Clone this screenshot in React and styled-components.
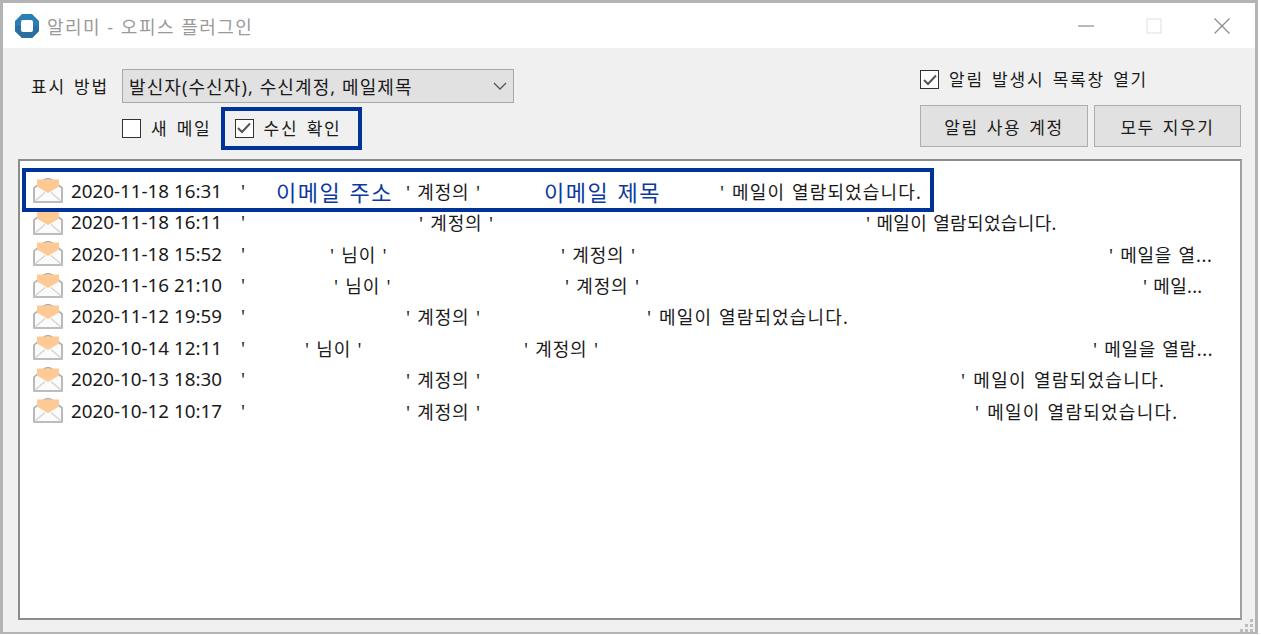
import styled, { createGlobalStyle } from "styled-components";

const Global = createGlobalStyle`
  html, body { margin: 0; padding: 0; background: #fff; }
  body { font-family: "Noto Sans", "Noto Sans CJK KR", sans-serif; color: #1a1a1a; }
`;

const Frame = styled.div`
  position: relative;
  box-sizing: border-box;
  width: 1258px;
  height: 634px;
  border: 3px solid #b4b4b4;
  border-bottom-width: 2px;
  display: flex;
  flex-direction: column;
  background: #f0f0f0;
  overflow: hidden;
`;

const TitleBar = styled.div`
  height: 45px;
  flex: none;
  background: #fff;
  display: flex;
  align-items: center;
  padding-left: 12px;
`;

const AppTitle = styled.span`
  margin-left: 8px;
  font-size: 18px;
  letter-spacing: 1.5px;
  color: #9a9a9a;
`;

const WinButtons = styled.div`
  margin-left: auto;
  display: flex;
  align-items: center;
  gap: 52px;
  padding-right: 25px;
`;

const Toolbar = styled.div`
  display: flex;
  justify-content: space-between;
  height: 111px;
  flex: none;
  box-sizing: border-box;
  padding: 21px 14px 0 28px;
`;

const LeftTools = styled.div`
  display: flex;
  flex-direction: column;
`;

const PickRow = styled.div`
  display: flex;
  align-items: center;
  gap: 13px;
`;

const Label = styled.span`
  font-size: 17px;
  line-height: 21px;
  letter-spacing: 1.8px;
  word-spacing: 2px;
  white-space: nowrap;
`;

const Select = styled.div`
  box-sizing: border-box;
  width: 392px;
  height: 34px;
  background: #e1e1e1;
  border: 1px solid #a9a9a9;
  display: flex;
  align-items: center;
  justify-content: space-between;
  padding: 0 6px;
  font-size: 18px;
  letter-spacing: 1.1px;
`;

const CheckRow = styled.div`
  display: flex;
  align-items: center;
  margin: 8px 0 0 91px;
  height: 34px;
`;

const Check = styled.label`
  display: flex;
  align-items: center;
  gap: 10px;
  margin-left: ${(p) => p.$left || 0}px;
`;

const Box = styled.span`
  box-sizing: border-box;
  width: 19px;
  height: 19px;
  flex: none;
  border: 1.5px solid #333;
  background: #fff;
  display: flex;
  align-items: center;
  justify-content: center;
`;

const RightTools = styled.div`
  width: 321px;
  display: flex;
  flex-direction: column;
`;

const Buttons = styled.div`
  display: flex;
  gap: 6px;
  margin-top: 15px;
`;

const Button = styled.div`
  box-sizing: border-box;
  height: 42px;
  width: ${(p) => p.$w}px;
  background: #e1e1e1;
  border: 1.5px solid #adadad;
  display: flex;
  align-items: center;
  justify-content: center;
  font-size: 17px;
  letter-spacing: 1.6px;
  word-spacing: 2px;
`;

const List = styled.div`
  box-sizing: border-box;
  margin: 0 13px 0 15px;
  height: 461px;
  background: #fff;
  border: 2px solid #8c8c8c;
  border-right-color: #a0a0a0;
  padding-top: 14px;
`;

const Row = styled.div`
  height: 31.45px;
  display: flex;
  align-items: center;
  padding-left: 13px;
  white-space: nowrap;
`;

const Stamp = styled.span`
  width: 170px;
  margin-left: 8px;
  flex: none;
  font-size: 18.8px;
`;

const Cell = styled.span`
  flex: none;
  width: ${(p) => p.$w}px;
  font-size: 18px;
  color: #1a1a1a;
  letter-spacing: ${(p) => p.$ls}px;
  word-spacing: 1px;
`;

const Note = styled(Cell)`
  font-size: 22px;
  color: #0b3a9e;
  letter-spacing: 1.5px;
`;

const Highlight = styled.div`
  position: absolute;
  box-sizing: border-box;
  border: 4px solid #003399;
  left: ${(p) => p.$x}px;
  top: ${(p) => p.$y}px;
  width: ${(p) => p.$w}px;
  height: ${(p) => p.$h}px;
  pointer-events: none;
`;

const Grip = styled.svg`
  position: absolute;
  right: 1px;
  bottom: 0;
`;

const Logo = () => (
  <svg width="24" height="24" viewBox="0 0 24 24">
    <path d="M7 0H17L24 7V17L17 24H7L0 17V7Z" fill="#2b7db5" />
    <path d="M0 12V17L7 24H17L24 17V12Z" fill="#2a6f9f" />
    <rect x="6" y="6" width="12" height="12" rx="2" fill="#fff" />
  </svg>
);

const Minimize = () => (
  <svg width="16" height="16" viewBox="0 0 16 16">
    <path d="M0 8H16" stroke="#8a8a8a" strokeWidth="1.2" />
  </svg>
);

const Maximize = () => (
  <svg width="16" height="16" viewBox="0 0 16 16">
    <rect x="1" y="1" width="14" height="14" fill="none" stroke="#e4e4e4" strokeWidth="1.2" />
  </svg>
);

const Close = () => (
  <svg width="16" height="16" viewBox="0 0 16 16">
    <path d="M0.5 0.5L15.5 15.5M15.5 0.5L0.5 15.5" stroke="#8a8a8a" strokeWidth="1.2" />
  </svg>
);

const Chevron = () => (
  <svg width="14" height="8" viewBox="0 0 14 8">
    <path d="M1 1L7 7L13 1" fill="none" stroke="#555" strokeWidth="1.3" />
  </svg>
);

const Tick = () => (
  <svg width="14" height="12" viewBox="0 0 14 12">
    <path d="M1 6L5 10L13 1.5" fill="none" stroke="#555" strokeWidth="2" />
  </svg>
);

const Envelope = () => (
  <svg width="30" height="25" viewBox="0 0 30 25" style={{ flex: "none" }}>
    <path d="M1 10L11 2Q15 -0.5 19 2L29 10V24H1Z" fill="#fbfbfb" stroke="#a8a8a8" strokeWidth="1.6" />
    <path d="M1.5 23.5L12 14.5M28.5 23.5L18 14.5" stroke="#d2d2d2" strokeWidth="1.2" fill="none" />
    <path d="M4 1.5H26V8.5L15 15L4 8.5Z" fill="#fdc994" />
  </svg>
);

const Checkbox = ({ checked, left, children }) => (
  <Check $left={left}>
    <Box>{checked && <Tick />}</Box>
    <Label>{children}</Label>
  </Check>
);

// [cell width, text, letter spacing]; a Note is the blue annotation over a blanked-out value
const rows = [
  { date: "2020-11-18 16:31", cells: [[35, "'"], [130, "이메일 주소", 0, true], [138, "' 계정의 '"], [176, "이메일 제목", 0, true], [400, "' 메일이 열람되었습니다.", 1.15]] },
  { date: "2020-11-18 16:11", cells: [[178, "'"], [447, "' 계정의 '"], [300, "' 메일이 열람되었습니다.", 0.35]] },
  { date: "2020-11-18 15:52", cells: [[89, "'"], [231, "' 님이 '"], [548, "' 계정의 '"], [120, "' 메일을 열...", 0.75]] },
  { date: "2020-11-16 21:10", cells: [[93, "'"], [231, "' 님이 '"], [578, "' 계정의 '"], [80, "' 메일...", 0.3]] },
  { date: "2020-11-12 19:59", cells: [[165, "'"], [241, "' 계정의 '"], [300, "' 메일이 열람되었습니다.", 1.15]] },
  { date: "2020-10-14 12:11", cells: [[64, "'"], [219, "' 님이 '"], [569, "' 계정의 '"], [130, "' 메일을 열람...", 0.7]] },
  { date: "2020-10-13 18:30", cells: [[165, "'"], [555, "' 계정의 '"], [300, "' 메일이 열람되었습니다.", 1.3]] },
  { date: "2020-10-12 10:17", cells: [[165, "'"], [569, "' 계정의 '"], [300, "' 메일이 열람되었습니다.", 1.25]] },
];

export default function App() {
  return (
    <Frame>
      <Global />
      <TitleBar>
        <Logo />
        <AppTitle>알리미 - 오피스 플러그인</AppTitle>
        <WinButtons>
          <Minimize />
          <Maximize />
          <Close />
        </WinButtons>
      </TitleBar>
      <Toolbar>
        <LeftTools>
          <PickRow>
            <Label>표시 방법</Label>
            <Select>
              <span>발신자(수신자), 수신계정, 메일제목</span>
              <Chevron />
            </Select>
          </PickRow>
          <CheckRow>
            <Checkbox>새 메일</Checkbox>
            <Checkbox checked left={23}>수신 확인</Checkbox>
          </CheckRow>
        </LeftTools>
        <RightTools>
          <Check>
            <Box><Tick /></Box>
            <Label>알림 발생시 목록창 열기</Label>
          </Check>
          <Buttons>
            <Button $w={168}>알림 사용 계정</Button>
            <Button $w={147}>모두 지우기</Button>
          </Buttons>
        </RightTools>
      </Toolbar>
      <List>
        {rows.map((row) => (
          <Row key={row.date}>
            <Envelope />
            <Stamp>{row.date}</Stamp>
            {row.cells.map(([w, text, ls = 0.8, note], i) =>
              note ? (
                <Note key={i} $w={w}>{text}</Note>
              ) : (
                <Cell key={i} $w={w} $ls={ls}>{text}</Cell>
              )
            )}
          </Row>
        ))}
      </List>
      <Highlight $x={218} $y={104} $w={141} $h={43} />
      <Highlight $x={19} $y={165} $w={912} $h={44} />
      <Grip width="14" height="14" viewBox="0 0 14 14">
        <g fill="#bdbdbd">
          <rect x="10" y="1" width="3" height="3" />
          <rect x="5" y="6" width="3" height="3" />
          <rect x="10" y="6" width="3" height="3" />
          <rect x="0" y="11" width="3" height="3" />
          <rect x="5" y="11" width="3" height="3" />
          <rect x="10" y="11" width="3" height="3" />
        </g>
      </Grip>
    </Frame>
  );
}
